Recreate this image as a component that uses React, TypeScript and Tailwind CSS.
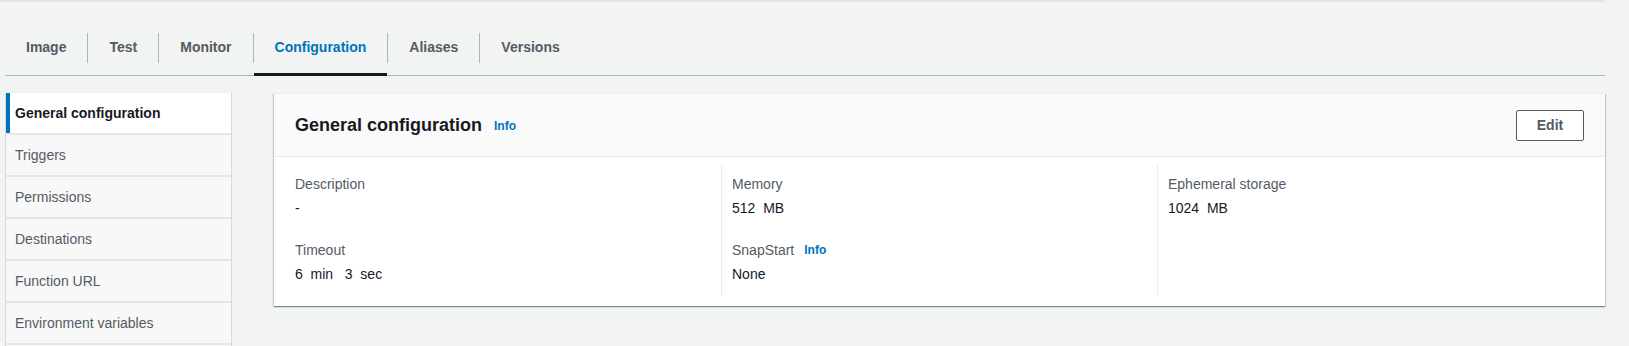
import React from 'react';

const tabs = ['Image', 'Test', 'Monitor', 'Configuration', 'Aliases', 'Versions'];
const navItems = [
  'General configuration',
  'Triggers',
  'Permissions',
  'Destinations',
  'Function URL',
  'Environment variables',
  '',
];

const Field = ({ label, value, info }: { label: string; value: React.ReactNode; info?: boolean }) => (
  <div className="mb-[20px]">
    <div className="flex items-center h-[22px] mb-[2px] text-[14px] text-[#545b64]">
      {label}
      {info && <span className="ml-[10px] text-[12px] font-bold text-[#0073bb]">Info</span>}
    </div>
    <div className="h-[22px] flex items-center text-[14px] text-[#16191f] whitespace-pre">{value}</div>
  </div>
);

export default function App() {
  return (
    <div
      className="w-[1629px] h-[346px] overflow-hidden bg-[#f2f3f3]"
      style={{ fontFamily: '"Liberation Sans", Arial, sans-serif' }}
    >
      <div className="w-[1605px] h-[2px] bg-[#e4e6e6]" />

      {/* tabs */}
      <div className="mt-[30px] ml-[5px] w-[1600px] flex items-end border-b border-[#aab7b8] h-[44px]">
        {tabs.map((t, i) => (
          <div key={t} className="flex items-center h-full">
            {i > 0 && <div className="w-px h-[30px] bg-[#aab7b8] mb-[12px]" />}
            <div
              className={
                'relative h-full flex items-center px-[21px] pb-[12px] text-[14px] font-bold ' +
                (t === 'Configuration' ? 'text-[#0073bb]' : 'text-[#545b64]')
              }
            >
              {t}
              {t === 'Configuration' && (
                <div className="absolute left-0 right-0 bottom-[-1px] h-[3px] bg-[#16191f]" />
              )}
            </div>
          </div>
        ))}
      </div>

      <div className="flex mt-[17px] ml-[5px] gap-[42px]">
        {/* side nav */}
        <div className="w-[227px] flex flex-col gap-[2px] bg-[#e4e7e7] border-x border-[#d5dbdb]">
          {navItems.map((n, i) => (
            <div
              key={i}
              className={
                'h-[40px] flex items-center px-[9px] text-[14px] ' +
                (i === 0
                  ? 'bg-white font-bold text-[#16191f] border-l-4 border-[#0073bb] pl-[5px]'
                  : 'bg-[#f8f8f8] text-[#545b64]')
              }
            >
              {n}
            </div>
          ))}
        </div>

        {/* panel */}
        <div className="w-[1331px] h-[213px] bg-white shadow-[0_1px_1px_0_rgba(0,28,36,0.3),1px_1px_1px_0_rgba(0,28,36,0.15),-1px_1px_1px_0_rgba(0,28,36,0.15)] border-t border-[#eaeded] self-start">
          <div className="h-[63px] bg-[#fafafa] border-b border-[#eaeded] flex items-center justify-between px-[21px]">
            <div className="flex items-center">
              <span className="text-[18px] font-bold text-[#16191f]">General configuration</span>
              <span className="ml-[12px] text-[12px] font-bold text-[#0073bb] mt-[2px]">Info</span>
            </div>
            <button className="w-[68px] h-[31px] border border-[#545b64] rounded-[2px] text-[14px] font-bold text-[#545b64] bg-white">
              Edit
            </button>
          </div>
          <div className="grid grid-cols-[426px_436px_1fr] px-[21px] pt-[7px]">
            <div className="pt-[9px]">
              <Field label="Description" value="-" />
              <Field label="Timeout" value={'6  min   3  sec'} />
            </div>
            <div className="border-l border-[#eaeded] pl-[10px] pt-[9px] h-[132px]">
              <Field label="Memory" value={'512  MB'} />
              <Field label="SnapStart" value="None" info />
            </div>
            <div className="border-l border-[#eaeded] pl-[10px] pt-[9px] h-[132px]">
              <Field label="Ephemeral storage" value={'1024  MB'} />
            </div>
          </div>
        </div>
      </div>
    </div>
  );
}
